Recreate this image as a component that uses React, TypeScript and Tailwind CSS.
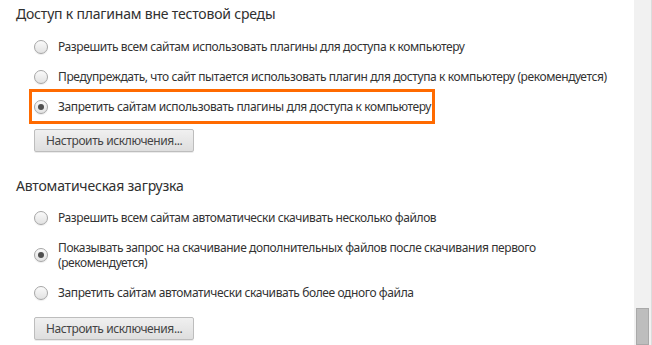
import React from 'react';

type Option = { label: React.ReactNode; checked?: boolean; highlight?: boolean };

const plugins: Option[] = [
  { label: 'Разрешить всем сайтам использовать плагины для доступа к компьютеру' },
  { label: 'Предупреждать, что сайт пытается использовать плагин для доступа к компьютеру (рекомендуется)' },
  { label: 'Запретить сайтам использовать плагины для доступа к компьютеру', checked: true, highlight: true },
];

const downloads: Option[] = [
  { label: 'Разрешить всем сайтам автоматически скачивать несколько файлов' },
  {
    label: (
      <>
        Показывать запрос на скачивание дополнительных файлов после скачивания первого
        <br />
        (рекомендуется)
      </>
    ),
    checked: true,
  },
  { label: 'Запретить сайтам автоматически скачивать более одного файла' },
];

function Radio({ checked }: { checked?: boolean }) {
  return (
    <span className="w-[14px] h-[14px] shrink-0 rounded-full border border-[#a6a6a6] bg-gradient-to-b from-[#fafafa] to-[#e2e2e2] shadow-[0_1px_1px_rgba(0,0,0,0.08)] flex items-center justify-center">
      {checked && <span className="w-[6px] h-[6px] rounded-full bg-[#505050]" />}
    </span>
  );
}

function Row({ opt }: { opt: Option }) {
  return (
    <div className="flex items-center">
      <div className="relative flex items-center">
        {opt.highlight && (
          <span className="absolute top-[-10px] bottom-[-10px] left-[-5px] right-[-4px] border-[3px] border-[#ff6a00] pointer-events-none" />
        )}
        <Radio checked={opt.checked} />
        <span className="ml-[10px] leading-[15px] whitespace-nowrap">{opt.label}</span>
      </div>
    </div>
  );
}

function ExceptionsButton({ className }: { className: string }) {
  return (
    <button
      className={`${className} self-start h-[23px] px-[11px] rounded-[2px] border border-[#bdbdbd] bg-gradient-to-b from-[#f0f0f0] to-[#dedede] shadow-[0_1px_0_rgba(0,0,0,0.08)] text-[#444] text-[12px] tracking-[-0.4px] leading-[21px]`}
    >
      Настроить исключения...
    </button>
  );
}

export default function App() {
  return (
    <div
      className="w-[652px] h-[345px] overflow-hidden bg-white flex text-[#333] text-[12px] tracking-[-0.4px]"
      style={{ fontFamily: '"Noto Sans", "Open Sans", sans-serif' }}
    >
      <div className="flex-1 flex flex-col pl-[16px]">
        <h3 className="mt-[4px] text-[14px] tracking-[-0.2px] leading-[20px] text-[#303030]">Доступ к плагинам вне тестовой среды</h3>
        <div className="mt-[15px] pl-[18px] flex flex-col gap-[15px]">
          {plugins.map((o, i) => (
            <Row key={i} opt={o} />
          ))}
        </div>
        <ExceptionsButton className="mt-[15px] ml-[18px]" />

        <h3 className="mt-[24px] text-[14px] tracking-[-0.2px] leading-[20px] text-[#303030]">Автоматическая загрузка</h3>
        <div className="mt-[14px] pl-[18px] flex flex-col gap-[15px]">
          {downloads.map((o, i) => (
            <Row key={i} opt={o} />
          ))}
        </div>
        <ExceptionsButton className="mt-[17px] ml-[18px]" />
      </div>

      <div className="w-[18px] bg-[#f1f1f1] border-r border-[#dcdcdc] flex flex-col pt-[308px] pl-[2px] pr-[2px]">
        <div className="flex-1 bg-[#bdbdbd] border border-[#a9a9a9]" />
      </div>
    </div>
  );
}
